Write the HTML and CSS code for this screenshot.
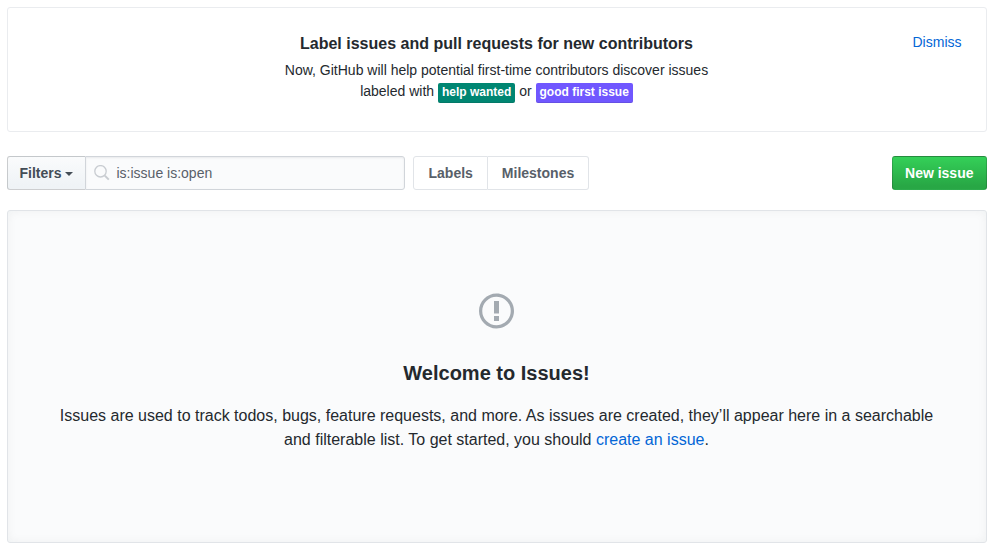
FILE: index.html
```html
<!DOCTYPE html>
<html lang="en">
<head>
<meta charset="utf-8">
<title>Issues</title>
<link rel="stylesheet" href="styles.css">
</head>
<body>
<section class="notice">
  <h4>Label issues and pull requests for new contributors</h4>
  <p>Now, GitHub will help potential first-time contributors discover issues<br>labeled with <span class="label help">help wanted</span> or <span class="label first">good first issue</span></p>
  <a class="dismiss" href="#">Dismiss</a>
</section>
<div class="subnav">
  <button class="btn filters">Filters<span class="caret"></span></button>
  <div class="search">
    <svg class="search-icon" width="16" height="16" viewBox="0 0 16 16"><circle cx="6.5" cy="6.3" r="5.7"/><path class="handle" d="M10.8 10.6L14.8 14.6"/></svg>
    <span>is:issue is:open</span>
  </div>
  <nav class="links"><a href="#">Labels</a><a href="#">Milestones</a></nav>
  <a class="btn new-issue" href="#">New issue</a>
</div>
<section class="blankslate">
  <svg class="issue-icon" width="35" height="40" viewBox="0 0 14 16"><path fill-rule="evenodd" d="M7 2.3c3.14 0 5.7 2.56 5.7 5.7s-2.56 5.7-5.7 5.7A5.71 5.71 0 0 1 1.3 8c0-3.14 2.56-5.7 5.7-5.7zM7 1C3.14 1 0 4.14 0 8s3.14 7 7 7 7-3.14 7-7-3.14-7-7-7zm1 3H6v5h2V4zm0 6H6v2h2v-2z"/></svg>
  <h3>Welcome to Issues!</h3>
  <p>Issues are used to track todos, bugs, feature requests, and more. As issues are created, they’ll appear here in a searchable and filterable list. To get started, you should <a href="#">create an issue</a>.</p>
</section>
</body>
</html>
```
FILE: styles.css
```css
* { box-sizing: border-box; }
body {
  margin: 0;
  padding: 7px 12.5px 0 6.5px;
  background: #fff;
  color: #24292e;
  font: 14px/21px "Liberation Sans", Arial, sans-serif;
}
h3, h4, p { margin: 0; }
a { color: #0366d6; text-decoration: none; }
.notice {
  position: relative;
  height: 125px;
  padding-top: 24px;
  border: 1px solid #eaecef;
  border-radius: 3px;
  text-align: center;
}
.notice h4 { font-size: 16px; line-height: 24px; margin-bottom: 4px; }
.dismiss { position: absolute; top: 24px; right: 24px; }
.label {
  display: inline-block;
  height: 20px;
  padding: 0 4px;
  border-radius: 2px;
  box-shadow: inset 0 -1px 0 rgba(27, 31, 35, .12);
  color: #fff;
  font-size: 12px;
  font-weight: 600;
  line-height: 18px;
}
.help { background: #008672; }
.first { background: #7057ff; }
.subnav { display: flex; height: 34px; margin: 24px 0 20px; }
.btn {
  padding: 6px 12px;
  border: 1px solid rgba(27, 31, 35, .2);
  border-radius: 3px;
  font: 600 14px/20px "Liberation Sans", Arial, sans-serif;
  white-space: nowrap;
}
.filters {
  flex: none;
  width: 78.5px;
  padding: 6px 0 6px 12px;
  border-right: 0;
  border-radius: 3px 0 0 3px;
  background: linear-gradient(-180deg, #fafbfc, #eff3f6 90%);
  color: #444d56;
  text-align: left;
}
.caret {
  display: inline-block;
  margin-left: 3.3px;
  border: 4px solid transparent;
  border-top-color: currentColor;
  border-bottom: 0;
  vertical-align: middle;
}
.search {
  display: flex;
  flex: none;
  align-items: center;
  width: 320px;
  padding-left: 8px;
  border: 1px solid #d1d5da;
  border-radius: 0 3px 3px 0;
  background: #fafbfc;
  box-shadow: inset 0 1px 2px rgba(27, 31, 35, .075);
  color: #586069;
}
.search-icon { margin-right: 6.5px; fill: none; stroke: #c8ccd1; stroke-width: 1.3; }
.handle { stroke-width: 2; }
.links { display: flex; margin-left: 8px; }
.links a {
  padding: 6px 14px;
  border: 1px solid #e1e4e8;
  color: #586069;
  font-weight: 600;
  line-height: 20px;
}
.links a:first-child { padding-left: 14.5px; border-radius: 3px 0 0 3px; }
.links a:last-child { border-left: 0; border-radius: 0 3px 3px 0; }
.new-issue {
  margin-left: auto;
  background: linear-gradient(-180deg, #34d058, #28a745 90%);
  color: #fff;
}
.blankslate {
  height: 333px;
  padding: 80px 48px 0;
  border: 1px solid #e1e4e8;
  border-radius: 3px;
  background: #fafbfc;
  box-shadow: inset 0 0 10px rgba(27, 31, 35, .05);
  text-align: center;
}
.issue-icon { display: block; margin: 0 auto; fill: #a3aab1; }
.blankslate h3 { margin: 27px 0 16px; font-size: 20px; line-height: 30px; }
.blankslate p { font-size: 16px; line-height: 24px; }
```
